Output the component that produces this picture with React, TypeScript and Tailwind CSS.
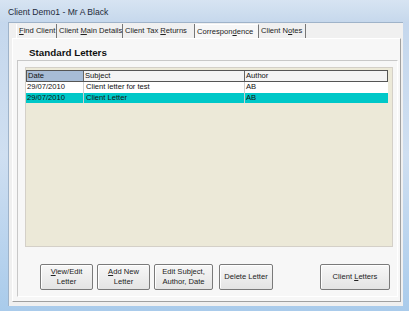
import React from 'react'

const tabs = [
  { pre: '', key: 'F', post: 'ind Client', w: 'w-[41px]', active: false },
  { pre: 'Client ', key: 'M', post: 'ain Details', w: 'w-[66px]', active: false },
  { pre: 'Client Tax ', key: 'R', post: 'eturns', w: 'w-[72px]', active: false },
  { pre: 'Correspon', key: 'd', post: 'ence', w: 'w-[64px]', active: true },
  { pre: 'Client N', key: 'o', post: 'tes', w: 'w-[47px]', active: false },
]

const letters = [
  { date: '29/07/2010', subject: 'Client letter for test', author: 'AB', selected: false },
  { date: '29/07/2010', subject: 'Client Letter', author: 'AB', selected: true },
]

function Btn({ children, className = '' }: { children: React.ReactNode; className?: string }) {
  return (
    <div
      className={`h-[26px] flex items-center justify-center text-center leading-[10px] text-[7.6px] text-[#222] border border-[#7a7a7a] rounded-[2px] bg-gradient-to-b from-[#f7f7f7] to-[#e4e4e4] shadow-[inset_1px_1px_0_#fff] ${className}`}
    >
      {children}
    </div>
  )
}

export default function App() {
  return (
    <div
      className="w-[409px] h-[311px] flex flex-col bg-gradient-to-b from-[#c3d6ec] via-[#cfdff1] to-[#a9cbeb] overflow-hidden"
      style={{ fontFamily: '"Liberation Sans", Arial, sans-serif' }}
    >
      {/* title bar */}
      <div className="h-[22px] shrink-0 pl-[8px] pt-[6px] text-[8.6px] text-[#1e2a3a] bg-gradient-to-b from-[#d7e4f2] to-[#c6d8ec]">
        Client Demo1 - Mr A Black
      </div>

      {/* client area */}
      <div className="flex-1 ml-[8px] mr-[6px] mb-[5px] bg-[#f0f0f0] flex flex-col border-l border-t border-[#9fb3c9]">
        {/* tab strip */}
        <div className="h-[15px] shrink-0 flex items-end pl-[7px] pt-[1px]">
          {tabs.map((t, i) => (
            <div
              key={i}
              className={`${t.w} h-[14px] flex items-center pl-[2px] text-[7.6px] text-[#222] border-r border-[#777] ${
                i === 0 ? 'border-l border-l-[#fff]' : ''
              } ${t.active ? 'bg-[#f7f7f7] border-t border-t-[#fff] -mb-px h-[15px]' : ''}`}
            >
              <span className="whitespace-pre">
                {t.pre}
                <span className="underline">{t.key}</span>
                {t.post}
              </span>
            </div>
          ))}
        </div>

        {/* tab panel */}
        <div className="flex-1 ml-[3px] mr-[2px] mb-[4px] bg-[#f7f7f7] border border-t-[#fff] border-l-[#fff] border-r-[#a0a0a0] border-b-[#a0a0a0] flex flex-col">
          <div className="h-[21px] shrink-0 pl-[16px] pt-[8px] text-[9.8px] font-bold text-[#111] leading-[11px]">
            Standard Letters
          </div>

          {/* group frame */}
          <div className="flex-1 ml-[4px] mr-[2px] mb-[4px] border border-t-[#c8c8c8] border-l-[#c8c8c8] border-r-[#fff] border-b-[#fff] flex flex-col">
            <div className="ml-[7px] mr-[4px] mt-[6px] h-[180px] bg-[#ece9d8] border border-[#d4d0c8] pt-[2px]">
              <div className="w-[362px] bg-white">
                {/* header */}
                <div className="flex h-[12px] border border-[#555] text-[7.6px] text-[#111] leading-[10px]">
                  <div className="w-[57px] bg-[#a7bcd6] border-r border-[#666] pl-[1px]">Date</div>
                  <div className="w-[161px] bg-[#f4f4f4] border-r border-[#666] pl-[1px]">Subject</div>
                  <div className="flex-1 bg-[#f4f4f4] pl-[1px]">Author</div>
                </div>
                {letters.map((l, i) => (
                  <div
                    key={i}
                    className={`flex h-[10.5px] text-[7.6px] leading-[10px] text-[#111] ${
                      l.selected ? 'bg-[#00c8c8]' : 'bg-white'
                    }`}
                  >
                    <div className="w-[58px] pl-[1px] border-r border-[#cfcfcf]">{l.date}</div>
                    <div className="w-[161px] pl-[2px] border-r border-[#cfcfcf]">{l.subject}</div>
                    <div className="flex-1 pl-[1px]">{l.author}</div>
                  </div>
                ))}
              </div>
            </div>

            {/* buttons */}
            <div className="flex mt-[17px] pl-[22px]">
              <Btn className="w-[53px]">
                <span>
                  <span className="underline">V</span>iew/Edit
                  <br />
                  Letter
                </span>
              </Btn>
              <Btn className="w-[53px] ml-[4px]">
                <span>
                  <span className="underline">A</span>dd New
                  <br />
                  Letter
                </span>
              </Btn>
              <Btn className="w-[59px] ml-[4px]">
                <span>
                  Edit Subject,
                  <br />
                  Author, Date
                </span>
              </Btn>
              <Btn className="w-[54px] ml-[6px]">Delete Letter</Btn>
              <Btn className="w-[70px] ml-[47px]">
                <span>
                  Client <span className="underline">L</span>etters
                </span>
              </Btn>
            </div>
          </div>
        </div>
      </div>
    </div>
  )
}
